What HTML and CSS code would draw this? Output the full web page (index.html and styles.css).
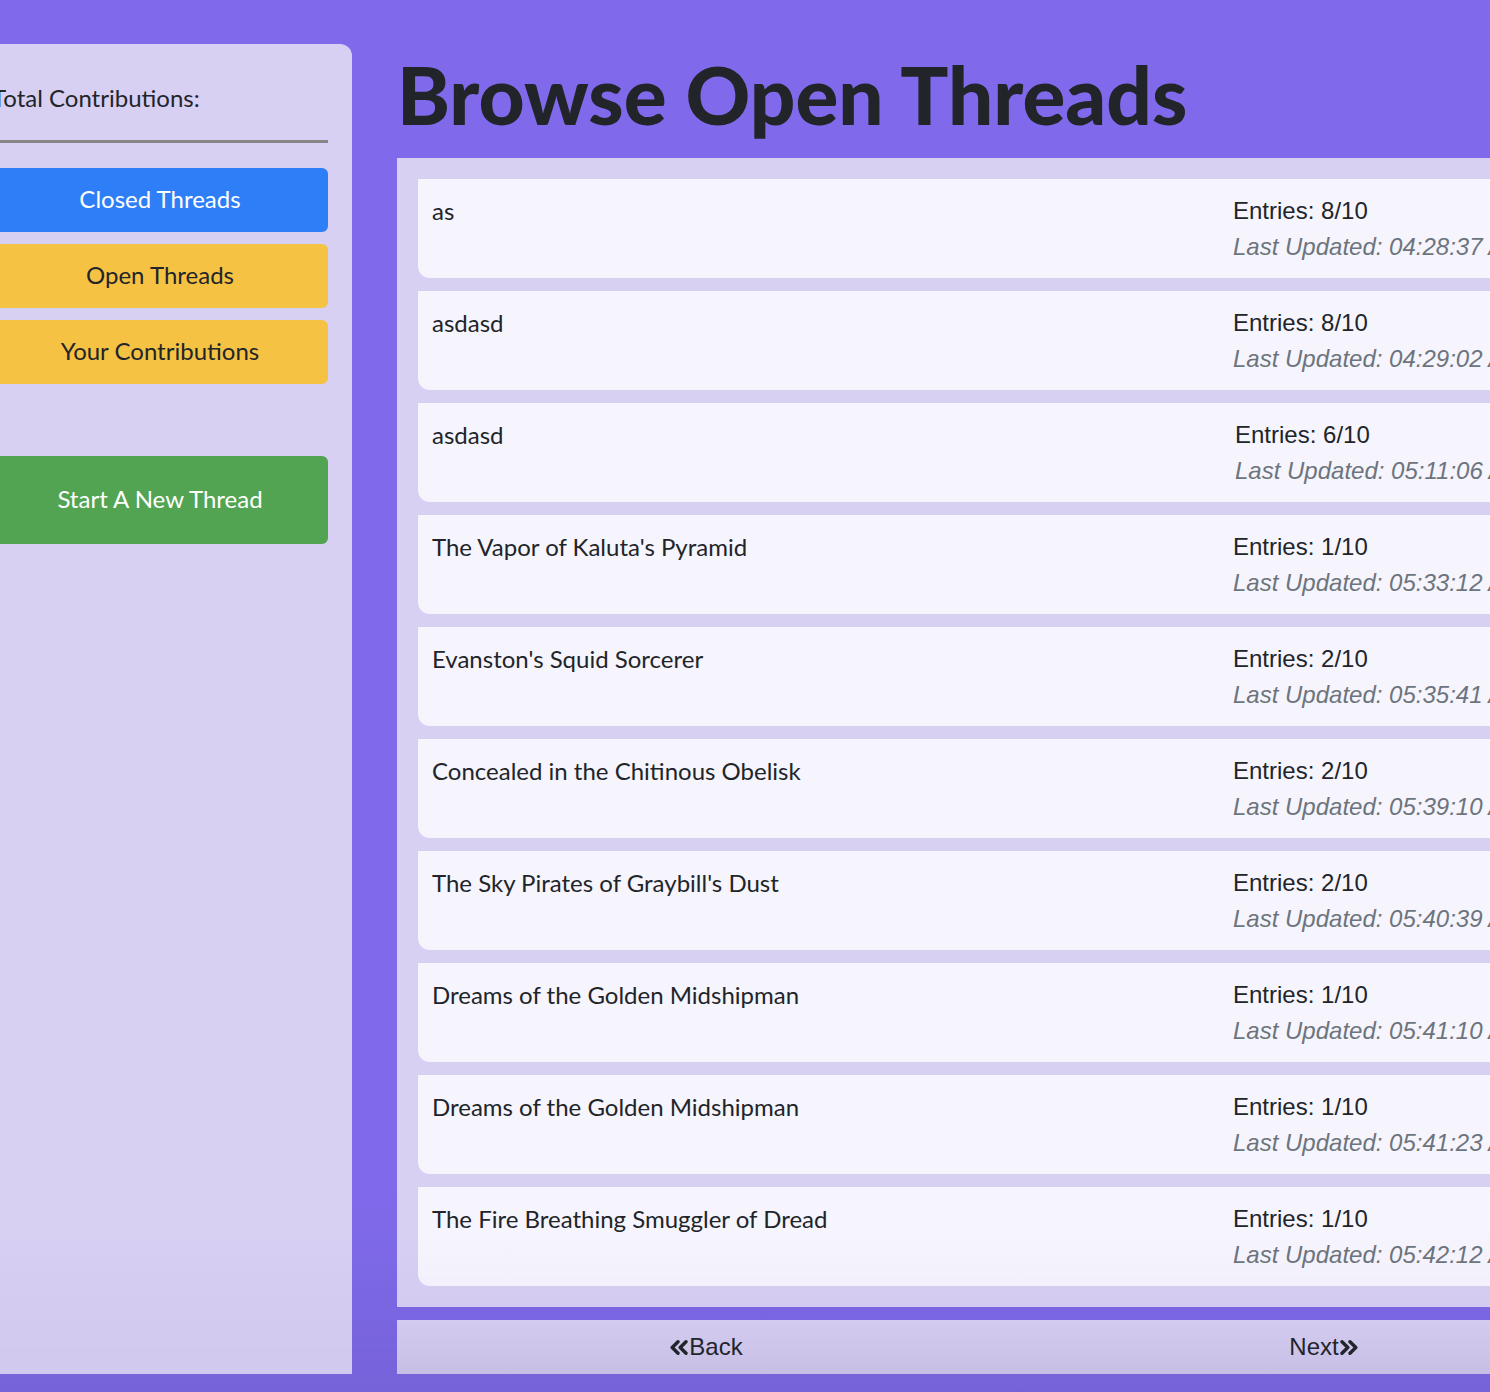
FILE: index.html
```html
<!DOCTYPE html>
<html lang="en">
<head>
<meta charset="utf-8">
<title>Browse Open Threads</title>
<link rel="stylesheet" href="styles.css">
</head>
<body>
<div class="page">
  <aside class="sidebar">
    <p class="total">Total Contributions:</p>
    <hr class="rule">
    <nav class="nav">
      <a class="btn btn-blue" href="#">Closed Threads</a>
      <a class="btn btn-yellow" href="#">Open Threads</a>
      <a class="btn btn-yellow" href="#">Your Contributions</a>
    </nav>
    <a class="btn btn-green btn-new" href="#">Start A New Thread</a>
  </aside>
  <main class="main">
    <h1 class="title">Browse Open Threads</h1>
    <section class="list">
      <article class="item"><div class="item-title">as</div><div class="meta"><div class="entries">Entries: 8/10</div><div class="updated">Last Updated: 04:28:37 AM</div></div></article>
      <article class="item"><div class="item-title">asdasd</div><div class="meta"><div class="entries">Entries: 8/10</div><div class="updated">Last Updated: 04:29:02 AM</div></div></article>
      <article class="item"><div class="item-title">asdasd</div><div class="meta shift"><div class="entries">Entries: 6/10</div><div class="updated">Last Updated: 05:11:06 AM</div></div></article>
      <article class="item"><div class="item-title">The Vapor of Kaluta's Pyramid</div><div class="meta"><div class="entries">Entries: 1/10</div><div class="updated">Last Updated: 05:33:12 AM</div></div></article>
      <article class="item"><div class="item-title">Evanston's Squid Sorcerer</div><div class="meta"><div class="entries">Entries: 2/10</div><div class="updated">Last Updated: 05:35:41 AM</div></div></article>
      <article class="item"><div class="item-title">Concealed in the Chitinous Obelisk</div><div class="meta"><div class="entries">Entries: 2/10</div><div class="updated">Last Updated: 05:39:10 AM</div></div></article>
      <article class="item"><div class="item-title">The Sky Pirates of Graybill's Dust</div><div class="meta"><div class="entries">Entries: 2/10</div><div class="updated">Last Updated: 05:40:39 AM</div></div></article>
      <article class="item"><div class="item-title">Dreams of the Golden Midshipman</div><div class="meta"><div class="entries">Entries: 1/10</div><div class="updated">Last Updated: 05:41:10 AM</div></div></article>
      <article class="item"><div class="item-title">Dreams of the Golden Midshipman</div><div class="meta"><div class="entries">Entries: 1/10</div><div class="updated">Last Updated: 05:41:23 AM</div></div></article>
      <article class="item"><div class="item-title">The Fire Breathing Smuggler of Dread</div><div class="meta"><div class="entries">Entries: 1/10</div><div class="updated">Last Updated: 05:42:12 AM</div></div></article>
    </section>
    <div class="pager">
      <a class="pager-link" href="#"><svg class="chev" viewBox="0 0 20 15" aria-hidden="true"><path d="M9 1.8 L3.2 7.5 L9 13.2 M17 1.8 L11.2 7.5 L17 13.2" fill="none" stroke="#212529" stroke-width="3.4" stroke-linecap="round" stroke-linejoin="round"/></svg>Back</a>
      <a class="pager-link" href="#">Next<svg class="chev" viewBox="0 0 20 15" aria-hidden="true"><path d="M3 1.8 L8.8 7.5 L3 13.2 M11 1.8 L16.8 7.5 L11 13.2" fill="none" stroke="#212529" stroke-width="3.4" stroke-linecap="round" stroke-linejoin="round"/></svg></a>
    </div>
  </main>
</div>
</body>
</html>
```
FILE: styles.css
```css
html, body {
  margin: 0;
  padding: 0;
}
body {
  width: 1490px;
  height: 1392px;
  overflow: hidden;
  background: linear-gradient(180deg, #806aeb 0%, #806aeb 85%, #7a66df 100%);
  color: #212529;
  font-family: "Lato", "Noto Sans", sans-serif;
  font-size: 24px;
  line-height: 1.5;
}
body::after {
  content: "";
  position: fixed;
  left: 0;
  right: 0;
  bottom: 0;
  height: 160px;
  background: linear-gradient(180deg, rgba(60, 40, 130, 0) 0%, rgba(60, 40, 130, 0.05) 100%);
  pointer-events: none;
}
.page {
  display: flex;
  gap: 45px;
  width: max-content;
  margin-left: -32px;
  padding-top: 44px;
  padding-bottom: 18px;
  align-items: stretch;
}
.sidebar {
  width: 384px;
  box-sizing: border-box;
  padding: 36px 24px 0;
  background: #d8d0f3;
  border-radius: 12px 12px 0 0;
  display: flex;
  flex-direction: column;
}
.total {
  margin: 0;
  font-size: 24px;
  line-height: 36px;
}
.rule {
  margin: 24px 0 25px;
  border: 0;
  height: 3px;
  background: #858585;
}
.nav {
  display: flex;
  flex-direction: column;
  gap: 12px;
}
.btn {
  display: flex;
  align-items: center;
  justify-content: center;
  height: 64px;
  padding-bottom: 2px;
  box-sizing: border-box;
  border-radius: 6px;
  text-decoration: none;
  font-size: 24px;
}
.btn-blue {
  background: #2e7ef7;
  color: #fff;
}
.btn-yellow {
  background: #f6c244;
  color: #212529;
}
.btn-green {
  background: #52a452;
  color: #fff;
}
.btn-new {
  margin-top: 72px;
  height: 88px;
}
.main {
  width: 1236px;
  display: flex;
  flex-direction: column;
}
.title {
  margin: 2px 0 16px;
  font-size: 80px;
  line-height: 96px;
  font-weight: 900;
  color: #212529;
}
.list {
  background: #d8d0f3;
  padding: 21px;
  display: flex;
  flex-direction: column;
  gap: 13px;
}
.item {
  background: #f6f4fd;
  border-radius: 0 0 12px 12px;
  padding: 14px 14px 13px;
  display: grid;
  grid-template-columns: 1fr 365px;
  min-height: 72px;
}
.item-title {
  font-size: 24px;
  line-height: 36px;
}
.meta {
  font-family: "Liberation Sans", Arial, sans-serif;
  font-size: 24px;
  line-height: 36px;
  white-space: nowrap;
}
.meta.shift {
  padding-left: 2px;
}
.updated {
  font-style: italic;
  color: #6c757d;
}
.pager {
  margin-top: 13px;
  height: 54px;
  display: flex;
  background: linear-gradient(180deg, #d8d0f3 0%, #d3cbee 60%, #cdc5ea 100%);
}
.pager-link {
  flex: 1;
  display: flex;
  align-items: center;
  justify-content: center;
  font-family: "Liberation Sans", Arial, sans-serif;
  font-size: 24px;
  color: #212529;
  text-decoration: none;
}
.chev {
  width: 20px;
  height: 15px;
}
```
